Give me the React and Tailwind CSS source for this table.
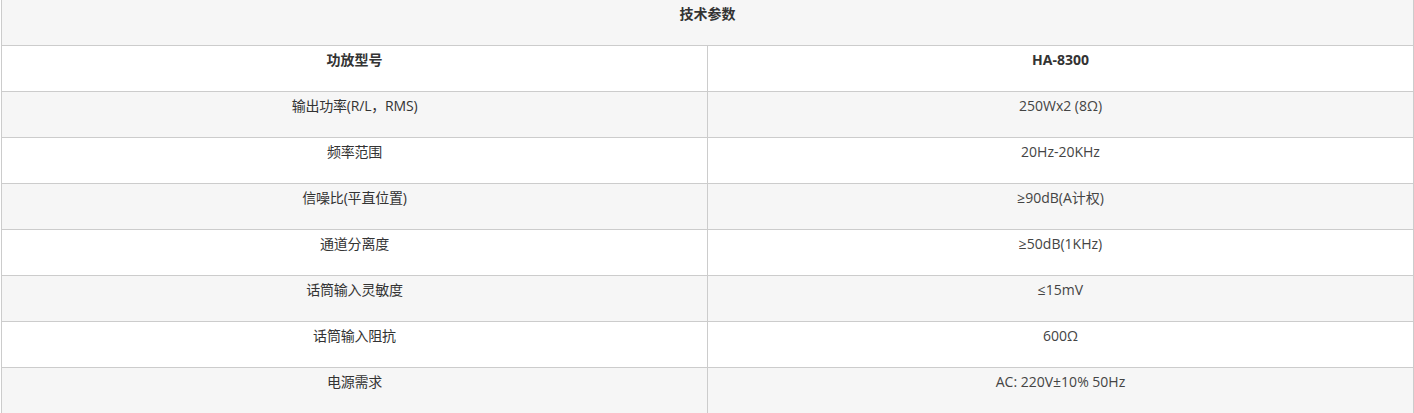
import React from "react";

const rows = [
  ["输出功率(R/L，RMS)", "250Wx2 (8Ω)"],
  ["频率范围", "20Hz-20KHz"],
  ["信噪比(平直位置)", "≥90dB(A计权)"],
  ["通道分离度", "≥50dB(1KHz)"],
  ["话筒输入灵敏度", "≤15mV"],
  ["话筒输入阻抗", "600Ω"],
  ["电源需求", "AC: 220V±10% 50Hz"],
];

const font = { fontFamily: '"Open Sans", "Noto Sans CJK SC", sans-serif' };

export default function App() {
  return (
    <div className="w-[1414px] h-[413px] overflow-hidden bg-white text-[14px] leading-5 text-[#333]" style={font}>
      <div className="border-x border-[#ccc] ml-[1px] w-[1413px]">
        <div className="h-[46px] bg-[#f6f6f6] border-b border-[#ccc] text-center font-bold pt-[4px]">
          技术参数
        </div>
        <div className="grid grid-cols-[706px_1fr] h-[46px] bg-white border-b border-[#ccc]">
          <div className="border-r border-[#ccc] text-center font-bold pt-[4px]">功放型号</div>
          <div className="text-center font-bold pt-[4px]">HA-8300</div>
        </div>
        {rows.map(([k, v], i) => (
          <div
            key={k}
            className={`grid grid-cols-[706px_1fr] h-[46px] border-b border-[#ccc] ${i % 2 === 0 ? "bg-[#f6f6f6]" : "bg-white"}`}
          >
            <div className="border-r border-[#ccc] text-center pt-[4px] tracking-[-0.2px]">{k}</div>
            <div className="text-center pt-[4px] text-[#444]">{v}</div>
          </div>
        ))}
      </div>
    </div>
  );
}
